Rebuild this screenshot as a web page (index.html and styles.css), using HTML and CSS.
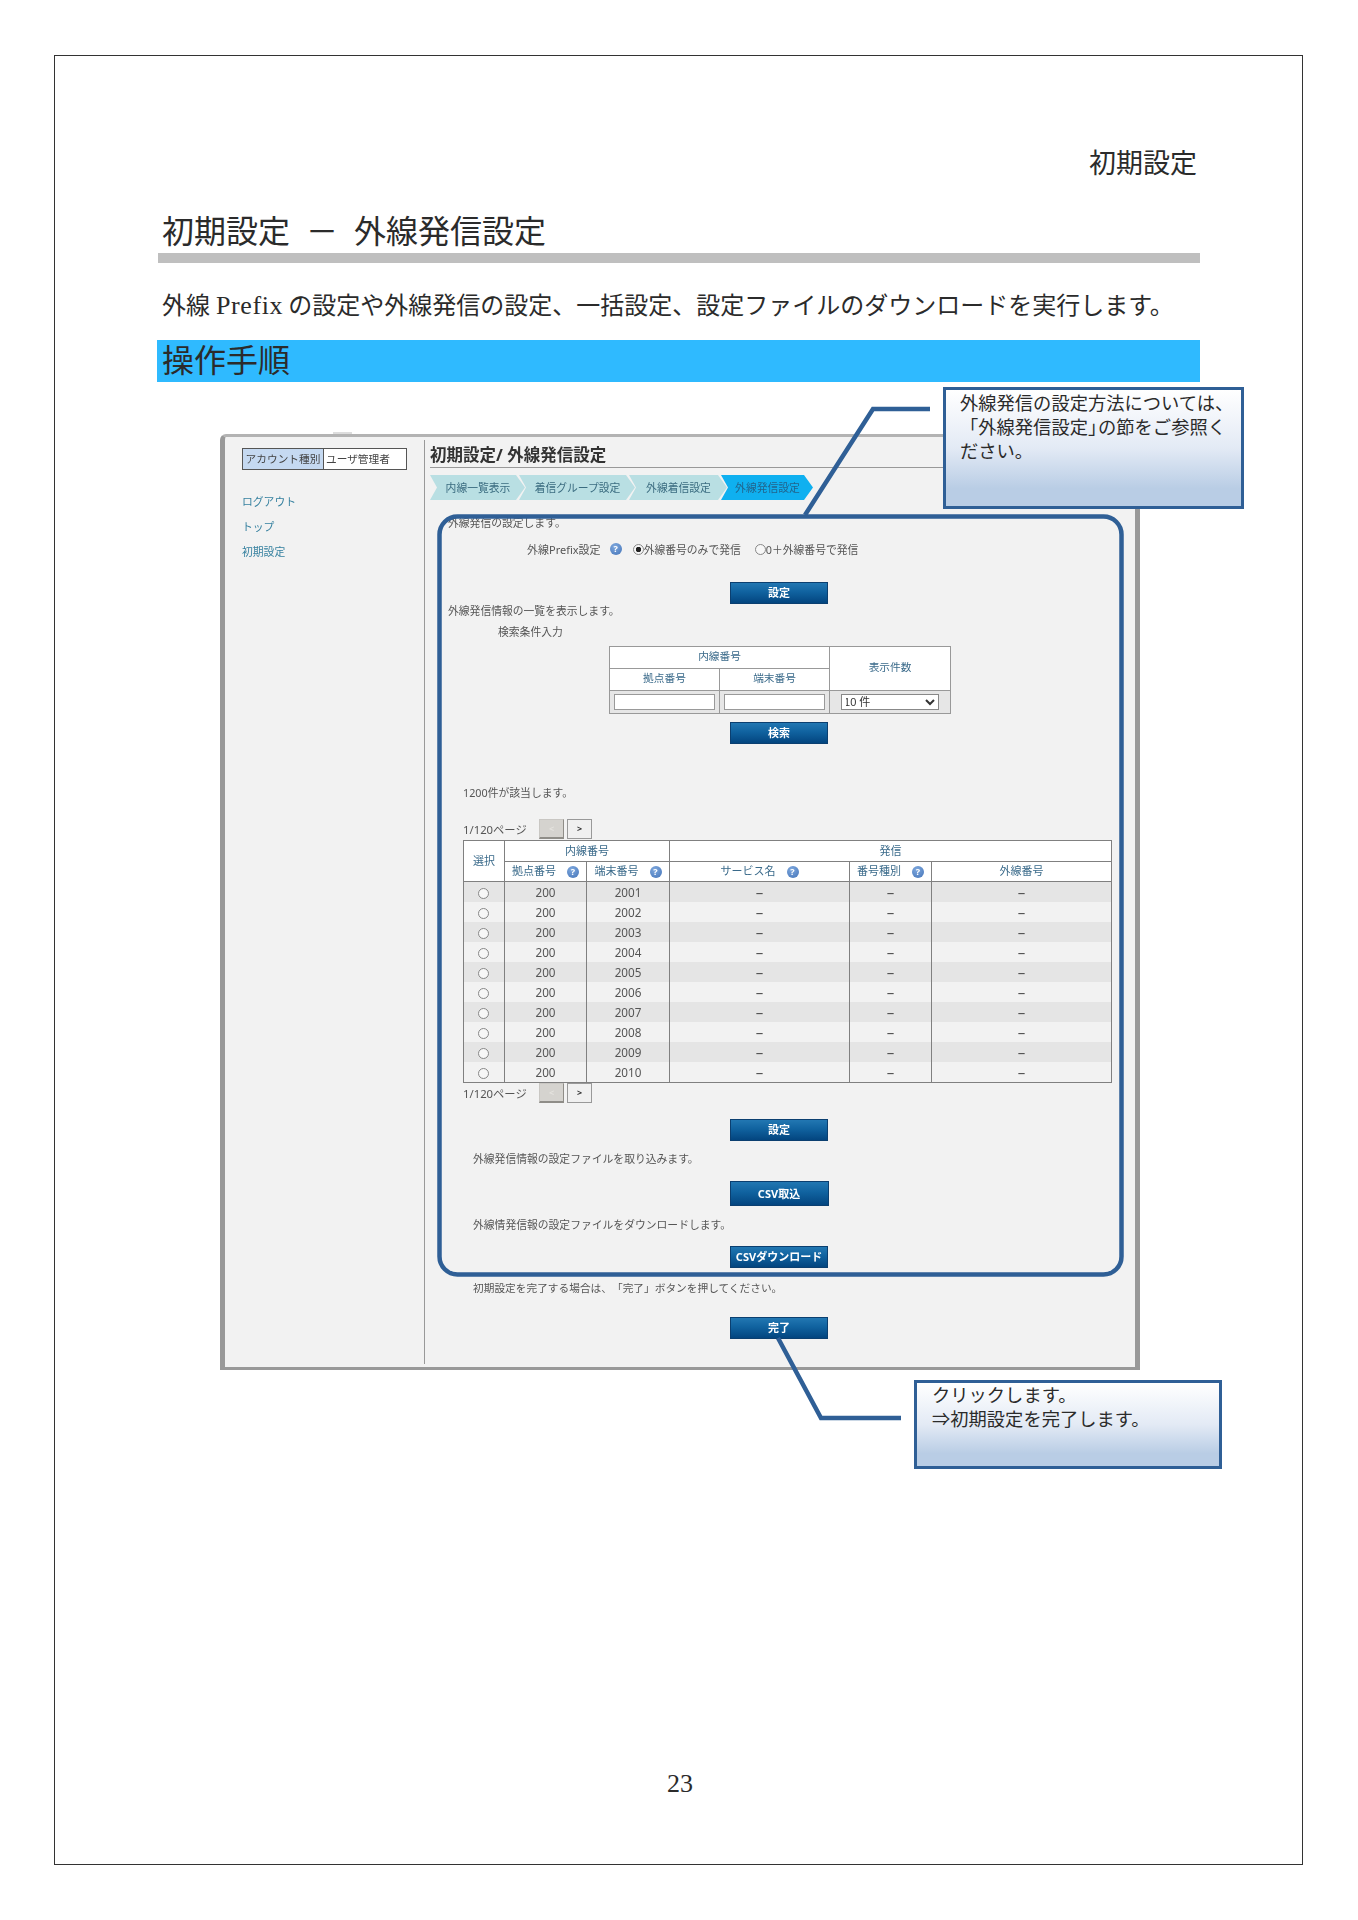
FILE: index.html
```html
<!DOCTYPE html>
<html lang="ja">
<head>
    <meta charset="UTF-8">
    <meta name="viewport" content="width=device-width, initial-scale=1.0">
    <title>初期設定 － 外線発信設定</title>
    <link rel="stylesheet" href="styles.css">
</head>
<body>
<div class="page">
    <div class="running-head">初期設定</div>
    <h1 class="doc-title">初期設定 － 外線発信設定</h1>
    <p class="doc-lead">外線 <span class="latin">Prefix</span> の設定や外線発信の設定、一括設定、設定ファイルのダウンロードを実行します。</p>
    <h2 class="doc-section">操作手順</h2>

    <div class="window">
        <div class="sidebar">
            <div class="account">
                <div class="account-label">アカウント種別</div>
                <div class="account-value">ユーザ管理者</div>
            </div>
            <ul class="side-links">
                <li>ログアウト</li>
                <li>トップ</li>
                <li>初期設定</li>
            </ul>
        </div>

        <div class="main">
            <div class="main-title">初期設定/ 外線発信設定</div>
            <div class="steps">
                <div class="step step-1">内線一覧表示</div>
                <div class="step step-2">着信グループ設定</div>
                <div class="step step-3">外線着信設定</div>
                <div class="step step-4 active">外線発信設定</div>
            </div>

            <div class="note note-first">外線発信の設定します。</div>
            <div class="prefix-row">
                <span class="prefix-label">外線Prefix設定</span>
                <span class="help">?</span>
                <label class="radio-label first"><input type="radio" name="prefix" checked>外線番号のみで発信</label>
                <label class="radio-label second"><input type="radio" name="prefix">0＋外線番号で発信</label>
            </div>
            <button class="btn btn-prefix">設定</button>

            <div class="note">外線発信情報の一覧を表示します。</div>
            <div class="note note-search">検索条件入力</div>
            <table class="search-table">
                <colgroup><col class="s1"><col class="s2"><col class="s3"></colgroup>
                <tr class="s-row-a">
                    <th colspan="2">内線番号</th>
                    <th rowspan="2">表示件数</th>
                </tr>
                <tr class="s-row-b">
                    <th>拠点番号</th>
                    <th>端末番号</th>
                </tr>
                <tr class="s-row-c">
                    <td><input type="text" class="search-input"></td>
                    <td><input type="text" class="search-input"></td>
                    <td>
                        <select class="search-select">
                            <option>10 件</option>
                        </select>
                    </td>
                </tr>
            </table>
            <button class="btn btn-search">検索</button>

            <div class="note note-count">1200件が該当します。</div>
            <div class="pager pager-top">
                <span class="pager-text">1/120ページ</span>
                <button class="pager-btn prev">&lt;</button>
                <button class="pager-btn next">&gt;</button>
            </div>

            <table class="list-table">
                <colgroup>
                    <col class="c-select"><col class="c-base"><col class="c-term">
                    <col class="c-service"><col class="c-kind"><col class="c-outer">
                </colgroup>
                <thead>
                    <tr class="head-a">
                        <th rowspan="2">選択</th>
                        <th colspan="2">内線番号</th>
                        <th colspan="3">発信</th>
                    </tr>
                    <tr class="head-b">
                        <th><span class="th-help">拠点番号<span class="help">?</span></span></th>
                        <th><span class="th-help">端末番号<span class="help">?</span></span></th>
                        <th><span class="th-help">サービス名<span class="help">?</span></span></th>
                        <th><span class="th-help">番号種別<span class="help">?</span></span></th>
                        <th>外線番号</th>
                    </tr>
                </thead>
                <tbody>
                    <tr><td><input type="radio" name="row"></td><td>200</td><td>2001</td><td>–</td><td>–</td><td>–</td></tr>
                    <tr><td><input type="radio" name="row"></td><td>200</td><td>2002</td><td>–</td><td>–</td><td>–</td></tr>
                    <tr><td><input type="radio" name="row"></td><td>200</td><td>2003</td><td>–</td><td>–</td><td>–</td></tr>
                    <tr><td><input type="radio" name="row"></td><td>200</td><td>2004</td><td>–</td><td>–</td><td>–</td></tr>
                    <tr><td><input type="radio" name="row"></td><td>200</td><td>2005</td><td>–</td><td>–</td><td>–</td></tr>
                    <tr><td><input type="radio" name="row"></td><td>200</td><td>2006</td><td>–</td><td>–</td><td>–</td></tr>
                    <tr><td><input type="radio" name="row"></td><td>200</td><td>2007</td><td>–</td><td>–</td><td>–</td></tr>
                    <tr><td><input type="radio" name="row"></td><td>200</td><td>2008</td><td>–</td><td>–</td><td>–</td></tr>
                    <tr><td><input type="radio" name="row"></td><td>200</td><td>2009</td><td>–</td><td>–</td><td>–</td></tr>
                    <tr><td><input type="radio" name="row"></td><td>200</td><td>2010</td><td>–</td><td>–</td><td>–</td></tr>
                </tbody>
            </table>

            <div class="pager">
                <span class="pager-text">1/120ページ</span>
                <button class="pager-btn prev">&lt;</button>
                <button class="pager-btn next">&gt;</button>
            </div>

            <button class="btn btn-save">設定</button>
            <div class="note note-file note-import">外線発信情報の設定ファイルを取り込みます。</div>
            <button class="btn btn-import">CSV取込</button>
            <div class="note note-file note-export">外線情発信報の設定ファイルをダウンロードします。</div>
            <button class="btn btn-export">CSVダウンロード</button>
            <div class="note note-file note-finish">初期設定を完了する場合は、「完了」ボタンを押してください。</div>
            <button class="btn btn-finish">完了</button>
        </div>
    </div>

    <div class="page-number">23</div>

    <!-- frame and leader lines drawn over the screenshot, in page coordinates -->
    <svg class="marks" viewBox="55 56 1247 1808" width="1247" height="1808">
        <rect x="439.5" y="516.5" width="682" height="758" rx="18" class="mark"/>
        <polyline points="930,409 873,409 805,515" class="mark"/>
        <polyline points="778,1338 821,1418 901,1418" class="mark"/>
    </svg>

    <div class="callout callout-a">外線発信の設定方法については、<br>「外線発信設定<span class="close-bracket">」</span>の節をご参照く<br>ださい。</div>
    <div class="callout callout-b">クリックします。<br>⇒初期設定を完了します。</div>
</div>
</body>
</html>
```

FILE: styles.css
```css
body {
    margin: 0;
    background-color: #fff;
    font-family: "Liberation Serif", "Noto Sans CJK JP", serif;
    color: #2b2b2b;
}
.page {
    position: relative;
    box-sizing: border-box;
    width: 1249px;
    height: 1810px;
    margin: 55px 0 0 54px;
    padding: 93px 102px 0 103px;
    border: 1px solid #333;
}
.running-head {
    font-size: 27px;
    line-height: 30px;
    text-align: right;
    padding-right: 3px;
}
.doc-title {
    margin: 33px 0 0;
    padding: 0 0 1px 4px;
    border-bottom: 10px solid #bfbfbf;
    font-size: 32px;
    font-weight: normal;
    line-height: 40px;
    word-spacing: 8px;
}
.doc-lead {
    margin: 28px 0 0;
    padding-left: 4px;
    font-size: 24px;
    line-height: 30px;
    white-space: nowrap;
}
.latin {
    font-size: 26px;
    letter-spacing: 0.6px;
    margin-right: -1px;
}
.doc-section {
    margin: 19px 0 0 -1px;
    padding-left: 5px;
    height: 42px;
    background-color: #2fbaff;
    font-size: 32px;
    font-weight: normal;
    line-height: 42px;
}

/* screenshot of the admin screen */
.window {
    position: relative;
    box-sizing: border-box;
    display: flex;
    width: 920px;
    height: 936px;
    margin: 52px 0 0 62px;
    background-color: #f2f2f2;
    border-style: solid;
    border-color: #b3b3b3 #999 #999 #999;
    border-width: 3px 5px 3px 5px;
    border-top-left-radius: 6px;
    font-family: "Noto Sans", "Noto Sans CJK JP", sans-serif;
    color: #555;
    filter: blur(0.3px);
}
.window::before {
    content: "";
    position: absolute;
    left: 108px;
    top: -5px;
    width: 19px;
    height: 2px;
    background-color: #ddd;
}
.sidebar {
    box-sizing: border-box;
    width: 200px;
    margin: 3px 0 3px;
    padding: 8px 0 0 17px;
    border-right: 1px solid #999;
    flex-shrink: 0;
}
.account {
    box-sizing: border-box;
    display: flex;
    width: 165px;
    height: 22px;
    border: 1px solid #555;
    background-color: #fff;
    font-size: 10.7px;
    line-height: 20px;
}
.account-label {
    width: 80px;
    text-align: center;
    background-color: #c5d9f1;
    border-right: 1px solid #555;
    color: #444;
    white-space: nowrap;
}
.account-value {
    padding-left: 2px;
    color: #444;
}
.side-links {
    margin: 19px 0 0;
    padding: 0;
    list-style: none;
    font-size: 10.8px;
    line-height: 25px;
    color: #35809f;
}
.main {
    flex: 1;
    padding: 4px 7px 0 5px;
    min-width: 0;
}
.main-title {
    height: 26px;
    border-bottom: 1px solid #999;
    font-size: 16.5px;
    font-weight: bold;
    line-height: 28px;
    color: #333;
}
.steps {
    display: flex;
    margin-top: 7px;
    height: 25px;
}
.step {
    box-sizing: border-box;
    height: 25px;
    margin-right: -6px;
    padding-left: 1px;
    background-color: #b9dfe3;
    clip-path: polygon(0 0, calc(100% - 9px) 0, 100% 50%, calc(100% - 9px) 100%, 0 100%, 7px 50%);
    font-size: 10.8px;
    line-height: 25px;
    text-align: center;
    color: #3b6c80;
    white-space: nowrap;
}
.step-1 { width: 95px; }
.step-2 { width: 116px; }
.step-3 { width: 98px; }
.step-4 { width: 92px; }
.step.active {
    background-color: #0fb0f0;
    color: #22648c;
}
.note {
    margin-left: 18px;
    font-size: 10.8px;
    line-height: 14px;
    white-space: nowrap;
}
.note-first { margin-top: 16px; }
.note-search {
    margin: 7px 0 0 68px;
}
.note-count {
    margin: 42px 0 0 33px;
}
.note-file { margin-left: 43px; }
.note-import { margin-top: 11px; }
.note-export { margin-top: 12px; }
.note-finish {
    margin-top: 13px;
    font-size: 10.7px;
    text-spacing-trim: space-all;
}

.prefix-row {
    display: flex;
    align-items: center;
    margin: 12px 0 0 97px;
    height: 14px;
    font-size: 11px;
    white-space: nowrap;
}
.help {
    display: inline-block;
    width: 12px;
    height: 12px;
    border-radius: 50%;
    background: radial-gradient(circle at 40% 30%, #7ea8de, #4474b8);
    color: #fff;
    font-size: 9px;
    font-weight: bold;
    line-height: 12px;
    text-align: center;
    flex-shrink: 0;
}
.prefix-row .help { margin-left: 9px; }
.radio-label {
    display: flex;
    align-items: center;
    font-size: 10.8px;
}
.radio-label.first { margin-left: 11px; }
.radio-label.second { margin-left: 14px; }
input[type="radio"] {
    appearance: none;
    box-sizing: border-box;
    width: 11px;
    height: 11px;
    margin: 0;
    border: 1px solid #888;
    border-radius: 50%;
    background-color: #f7f7f7;
    vertical-align: middle;
}
input[type="radio"]:checked {
    background: radial-gradient(circle, #222 2.5px, #f7f7f7 3px);
}
.btn {
    display: block;
    box-sizing: border-box;
    width: 98px;
    height: 22px;
    margin: 0 auto;
    padding: 0;
    border: 1px solid #0b3f70;
    background: linear-gradient(#2277b2, #10629f 45%, #03457f);
    color: #fff;
    font-family: inherit;
    font-size: 11px;
    font-weight: bold;
    line-height: 18px;
    white-space: nowrap;
}
.btn-prefix { margin-top: 26px; }
.btn-search { margin-top: 8px; }
.btn-save { margin-top: 16px; }
.btn-import {
    margin-top: 15px;
    width: 99px;
    height: 25px;
}
.btn-export { margin-top: 14px; }
.btn-finish { margin-top: 22px; }

.search-table {
    margin: 7px 0 0 179px;
    width: 341px;
    border-collapse: collapse;
    table-layout: fixed;
    font-size: 10.7px;
}
.s1 { width: 110px; }
.s2 { width: 110px; }
.s3 { width: 121px; }
.search-table th,
.search-table td {
    padding: 0;
    border: 1px solid #999;
    text-align: center;
}
.search-table th {
    padding-bottom: 4px;
    background-color: #fff;
    font-weight: normal;
    color: #3a6a8a;
}
.search-table td { background-color: #e6e6e6; }
.s-row-a { height: 22px; }
.s-row-b { height: 22px; }
.s-row-c { height: 23px; }
.search-input {
    display: block;
    box-sizing: border-box;
    width: 101px;
    height: 16px;
    margin: 0 0 0 4px;
    padding: 0;
    border: 1px solid #999;
    background-color: #fff;
}
.search-select {
    display: block;
    box-sizing: border-box;
    width: 98px;
    height: 16px;
    margin: 0 auto;
    padding: 0;
    border: 1px solid #888;
    background-color: #fff;
    font-family: "Liberation Sans", "Noto Sans CJK JP", sans-serif;
    font-size: 11px;
    text-indent: -2px;
    color: #333;
}

.pager {
    display: flex;
    align-items: center;
    margin-left: 33px;
    height: 20px;
}
.pager-top { margin-top: 19px; }
.pager-text {
    width: 76px;
    font-size: 11.3px;
    white-space: nowrap;
}
.pager-btn {
    box-sizing: border-box;
    width: 25px;
    height: 20px;
    margin-right: 3px;
    padding: 0;
    font-family: inherit;
    font-size: 9px;
    font-weight: bold;
    line-height: 16px;
}
.pager-btn.prev {
    border: 1px solid #c9c7c3;
    border-bottom: 2px solid #8f8d88;
    border-right-color: #8f8d88;
    background-color: #d5d3cf;
    color: #e4e2de;
}
.pager-btn.next {
    border: 1px solid #999;
    background-color: #f0f0f0;
    color: #333;
}

.list-table {
    margin: 1px 0 0 33px;
    width: 648px;
    border-collapse: collapse;
    table-layout: fixed;
    font-size: 11.7px;
}
.c-select { width: 41px; }
.c-base { width: 82px; }
.c-term { width: 83px; }
.c-service { width: 180px; }
.c-kind { width: 82px; }
.c-outer { width: 180px; }
.list-table th,
.list-table td {
    padding: 0;
    border: 1px solid #808080;
    text-align: center;
}
.list-table th {
    padding-bottom: 3px;
    background-color: #fff;
    font-size: 11px;
    font-weight: normal;
    color: #3a6a8a;
}
.list-table td {
    border-top: none;
    border-bottom: none;
    height: 19px;
    padding-bottom: 1px;
    line-height: 16px;
}
.list-table td input { margin-right: 2px; }
.list-table td:nth-child(n+4) { font-size: 15px; }
.list-table tbody tr:nth-child(odd) td { background-color: #e5e5e5; }
.list-table tbody tr:nth-child(even) td { background-color: #f2f2f2; }
.list-table tbody tr:last-child td { border-bottom: 1px solid #808080; }
.head-a { height: 21px; }
.head-b { height: 20px; }
.th-help {
    display: inline-flex;
    align-items: center;
    gap: 11px;
}
.th-help .help { margin-top: 3px; }

.page-number {
    margin-top: 399px;
    padding-left: 2px;
    font-size: 26px;
    line-height: 30px;
    text-align: center;
}
.marks {
    position: absolute;
    left: 0;
    top: 0;
    pointer-events: none;
}
.mark {
    fill: none;
    stroke: #2f5f96;
    stroke-width: 4.5;
}
.callout {
    position: absolute;
    box-sizing: border-box;
    border: 3px solid #2f5f96;
    background: linear-gradient(#fff, #e3eaf5 50%, #b9cde5 85%);
    font-size: 18.3px;
    line-height: 24px;
    white-space: nowrap;
}
.close-bracket { letter-spacing: -0.45em; }
.callout-a {
    left: 888px;
    top: 331px;
    width: 301px;
    height: 122px;
    padding: 2px 0 0 14px;
}
.callout-b {
    left: 859px;
    top: 1324px;
    width: 308px;
    height: 89px;
    padding: 1px 0 0 15px;
}
```
